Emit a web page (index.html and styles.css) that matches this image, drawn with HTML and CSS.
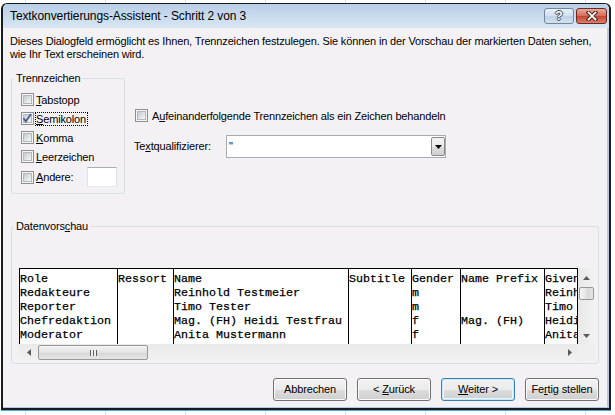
FILE: index.html
```html
<!DOCTYPE html>
<html lang="de">
<head>
<meta charset="utf-8">
<title>Textkonvertierungs-Assistent</title>
<link rel="stylesheet" href="styles.css">
</head>
<body>
<div class="window">
  <div class="titlebar">
    <span class="title">Textkonvertierungs-Assistent - Schritt 2 von 3</span>
    <div class="caption-btns">
      <span class="cap-btn help">?</span>
      <span class="cap-btn close"><svg width="12" height="10" viewBox="0 0 12 10"><path d="M2.5 1.5 L9.5 8.5 M9.5 1.5 L2.5 8.5" stroke="#4a1d17" stroke-width="3.8" stroke-linecap="square"/><path d="M2.5 1.5 L9.5 8.5 M9.5 1.5 L2.5 8.5" stroke="#fff" stroke-width="1.8" stroke-linecap="square"/></svg></span>
    </div>
  </div>
  <div class="content">
    <p class="intro">Dieses Dialogfeld ermöglicht es Ihnen, Trennzeichen festzulegen. Sie können in der Vorschau der markierten Daten sehen,<br>wie Ihr Text erscheinen wird.</p>
    <div class="options">
      <fieldset class="group delims">
        <legend>Trennzeichen</legend>
        <div class="delim-list">
          <div class="row"><span class="cb"></span><span class="lbl"><u>T</u>abstopp</span></div>
          <div class="row"><span class="cb"><svg width="11" height="11" viewBox="0 0 11 11"><path d="M1.5 5.2 L3.8 8.4 L9 1" fill="none" stroke="#4a5d8f" stroke-width="1.8"/></svg></span><span class="lbl focus"><u>S</u>emikolon</span></div>
          <div class="row"><span class="cb"></span><span class="lbl"><u>K</u>omma</span></div>
          <div class="row"><span class="cb"></span><span class="lbl"><u>L</u>eerzeichen</span></div>
          <div class="row other"><span class="cb"></span><span class="lbl"><u>A</u>ndere:</span><span class="textbox"></span></div>
        </div>
      </fieldset>
      <div class="side">
        <div class="row consec"><span class="cb"></span><span class="lbl">A<u>u</u>feinanderfolgende Trennzeichen als ein Zeichen behandeln</span></div>
        <div class="qual">
          <span class="qual-lbl">Te<u>x</u>tqualifizierer:</span>
          <div class="combo">
            <span class="combo-val">"</span>
            <span class="combo-btn"><svg width="7" height="4" viewBox="0 0 7 4"><path d="M0 0H7L3.5 4Z" fill="#000"/></svg></span>
          </div>
        </div>
      </div>
    </div>
    <fieldset class="group preview-group">
      <legend>Datenvors<u>c</u>hau</legend>
      <div class="preview">
        <div class="sheet">
          <div class="col w14">Role
Redakteure
Reporter
Chefredaktion
Moderator</div>
          <div class="col w8">Ressort</div>
          <div class="col w25">Name
Reinhold Testmeier
Timo Tester
Mag. (FH) Heidi Testfrau
Anita Mustermann</div>
          <div class="col w9">Subtitle</div>
          <div class="col w7">Gender
m
m
f
f</div>
          <div class="col w12">Name Prefix


Mag. (FH)</div>
          <div class="col last">Given Name
Reinhold
Timo
Heidi
Anita</div>
        </div>
        <div class="vscroll">
          <span class="sb-btn"><svg width="7" height="4" viewBox="0 0 7 4"><path d="M0 4H7L3.5 0Z" fill="#5a5a5a"/></svg></span>
          <span class="vthumb"></span>
          <span class="sb-fill"></span>
          <span class="sb-btn"><svg width="7" height="4" viewBox="0 0 7 4"><path d="M0 0H7L3.5 4Z" fill="#5a5a5a"/></svg></span>
        </div>
        <div class="hscroll">
          <span class="sb-btn h"><svg width="4" height="7" viewBox="0 0 4 7"><path d="M4 0V7L0 3.5Z" fill="#5a5a5a"/></svg></span>
          <span class="hthumb"><span class="grip"></span></span>
          <span class="sb-fill"></span>
          <span class="sb-btn h"><svg width="4" height="7" viewBox="0 0 4 7"><path d="M0 0V7L4 3.5Z" fill="#5a5a5a"/></svg></span>
        </div>
        <div class="corner"></div>
      </div>
    </fieldset>
    <div class="buttons">
      <span class="btn"><span>Abbrechen</span></span>
      <span class="btn"><span>&lt; <u>Z</u>urück</span></span>
      <span class="btn default"><span><u>W</u>eiter &gt;</span></span>
      <span class="btn"><span>Fe<u>r</u>tig stellen</span></span>
    </div>
  </div>
</div>
</body>
</html>
```
FILE: styles.css
```css
* { box-sizing: border-box; }
html, body { margin: 0; padding: 0; }
body {
  width: 615px;
  height: 415px;
  overflow: hidden;
  background: #fff repeating-linear-gradient(90deg, #fff 0 25px, #d9dde3 25px 26px, #fff 26px 80px);
  font-family: "Liberation Sans", Arial, sans-serif;
  font-size: 11px;
  line-height: 13px;
  letter-spacing: -0.15px;
  color: #000;
}
u { text-underline-offset: 1px; }

.window {
  width: 610px;
  height: 407px;
  margin: 3px 0 0 1px;
  border: 2px solid #1b1b1b;
  border-top-width: 1px;
  border-radius: 6px 6px 0 0;
  background: #f4f1f5;
  display: flex;
  flex-direction: column;
  box-shadow: 0 1px 0 #41b6e6;
}
.titlebar {
  flex: none;
  height: 24px;
  display: flex;
  align-items: center;
  justify-content: space-between;
  padding-left: 7px;
  background: linear-gradient(#b8cee7, #d9e6f3);
  border-radius: 5px 5px 0 0;
}
.title { font-size: 12px; letter-spacing: -0.1px; }
.caption-btns { display: flex; gap: 2px; align-items: center; margin-right: 2px; }
.cap-btn {
  height: 16px;
  border-radius: 3px;
  display: flex;
  align-items: center;
  justify-content: center;
}
.help {
  width: 30px;
  border: 1px solid #71879f;
  background: linear-gradient(#e9f0f8, #d2dfee 50%, #bfd1e6 51%, #d3e0ee);
  color: #f7f9fb;
  font-weight: bold;
  font-size: 13px;
  line-height: 14px;
  text-shadow: 1px 0 0 #454c57, -1px 0 0 #454c57, 0 1px 0 #454c57, 0 -1px 0 #454c57;
}
.close {
  width: 31px;
  border: 1px solid #6b2a22;
  background: linear-gradient(#eaa99b, #d66a57 50%, #c5452f 51%, #d9806f);
}

.content {
  flex: 1;
  padding: 0 8px;
  border-right: 2px solid #b1c9e4;
  border-bottom: 1px solid #b1c9e4;
  display: flex;
  flex-direction: column;
}
.intro { margin: 7px 0 0 -1px; white-space: nowrap; }

.options { display: flex; align-items: flex-start; margin-top: 11px; }

.group {
  margin: 0;
  padding: 0;
  min-width: 0;
  border: 1px solid #d5dfe5;
  border-radius: 3px;
}
.group legend {
  margin-left: 2px;
  padding: 0 2px;
  line-height: 13px;
}
.delims { width: 114px; flex: none; }
.delim-list { padding: 5px 7px 5px 9px; }
.row { display: flex; align-items: center; height: 19px; }
.row.other { height: 22px; }
.lbl { border: 1px solid transparent; line-height: 12px; white-space: nowrap; }
.delim-list .lbl { margin-left: 1px; padding-right: 1px; }
.lbl.focus { border: 1px dotted #000; }

.cb {
  flex: none;
  width: 13px;
  height: 13px;
  border: 1px solid #8f8f8f;
  display: flex;
  align-items: center;
  justify-content: center;
  background:
    linear-gradient(135deg, #c4c9d0, #f8f8f8) center / 7px 7px no-repeat,
    linear-gradient(#b3b8be, #b3b8be) center / 9px 9px no-repeat,
    #f5f5f5;
}
.cb svg { display: block; }

.textbox {
  width: 30px;
  height: 20px;
  margin-left: auto;
  background: #fff;
  border: 1px solid;
  border-color: #abadb3 #dbdfe6 #e3e9ef #e2e3ea;
}

.side { margin-left: 9px; }
.consec { padding-left: 1px; margin-top: 34px; }
.consec .lbl { margin-left: 3px; }
.qual { display: flex; align-items: center; margin-top: 10px; }
.qual-lbl { width: 92px; flex: none; }
.combo {
  width: 220px;
  height: 23px;
  display: flex;
  align-items: center;
  justify-content: space-between;
  background: #fff;
  border: 1px solid #a5acb5;
  padding: 1px 0 1px 1px;
}
.combo-val { padding-left: 1px; }
.combo-btn {
  width: 14px;
  height: 19px;
  display: flex;
  align-items: center;
  justify-content: center;
  border: 1px solid #8a8a8a;
  border-radius: 2px;
  background: linear-gradient(#f3f3f3, #ebebeb 50%, #dddddd 51%, #cfcfcf);
}

.preview-group { margin-top: 26px; }
.preview {
  display: grid;
  grid-template-columns: 559px 17px;
  grid-template-rows: 76px 17px;
  padding: 35px 0 2px 7px;
}
.sheet {
  display: flex;
  overflow: hidden;
  background: #fff;
  border-top: 1px solid #000;
  border-right: 1px solid #000;
  font-family: "Liberation Mono", "Courier New", monospace;
  font-size: 11.667px;
  line-height: 14px;
  letter-spacing: 0;
  -webkit-text-stroke: 0.25px #000;
}
.col {
  flex: none;
  border-left: 1px solid #000;
  padding-top: 3px;
  white-space: pre;
  overflow: hidden;
}
.w14 { width: 98px; }
.w8 { width: 56px; }
.w25 { width: 175px; }
.w9 { width: 63px; }
.w7 { width: 49px; }
.w12 { width: 84px; }
.col.last { flex: 1; }

.vscroll, .hscroll { display: flex; background: linear-gradient(90deg, #e8e8e8, #f2f2f2); }
.vscroll { flex-direction: column; }
.hscroll { background: linear-gradient(#e9e9e9, #f2f2f2); }
.sb-btn {
  flex: none;
  width: 17px;
  height: 17px;
  display: flex;
  align-items: center;
  justify-content: center;
}
.vscroll .sb-btn:first-child { height: 19px; }
.hscroll .sb-btn:first-child { width: 19px; }
.sb-fill { flex: 1; }
.vthumb {
  flex: none;
  height: 13px;
  margin: 0 1px;
  border: 1px solid #979797;
  border-radius: 2px;
  background: linear-gradient(90deg, #f4f4f4, #e2e2e2 50%, #d6d6d6 51%, #e6e6e6);
}
.hthumb {
  flex: none;
  width: 110px;
  margin: 1px 0;
  border: 1px solid #979797;
  border-radius: 2px;
  background: linear-gradient(#f4f4f4, #e2e2e2 50%, #d6d6d6 51%, #e6e6e6);
  display: flex;
  align-items: center;
  justify-content: center;
}
.grip {
  width: 7px;
  height: 6px;
  background: repeating-linear-gradient(90deg, #5e5e5e 0 1px, #f0f0f0 1px 3px);
}
.corner { background: #efefef; }

.buttons {
  display: flex;
  justify-content: flex-end;
  gap: 10px;
  margin-top: 14px;
}
.btn {
  width: 74px;
  height: 23px;
  display: flex;
  align-items: center;
  justify-content: center;
  border: 1px solid #707070;
  border-radius: 3px;
  background: linear-gradient(#f2f2f2, #ebebeb 50%, #dddddd 51%, #cfcfcf);
  box-shadow: inset 0 0 0 1px #fbfbfb;
  white-space: nowrap;
}
.btn.default {
  border-color: #3c7fb1;
  box-shadow: inset 0 0 0 1px #c4e8fb, inset 0 0 0 2px #e8f6fd;
}
```
